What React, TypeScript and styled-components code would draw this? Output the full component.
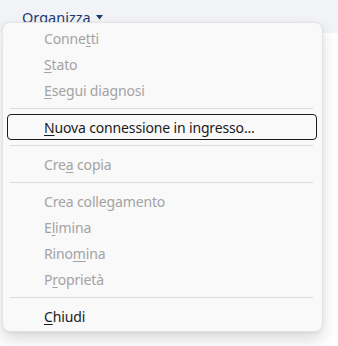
import React from "react";
import styled, { createGlobalStyle } from "styled-components";

const Global = createGlobalStyle`
  html, body { margin: 0; padding: 0; background: #ffffff; }
  body { font-family: "Noto Sans", "Open Sans", sans-serif; }
  #root { width: 338px; height: 346px; overflow: hidden; }
`;

const Page = styled.div`
  position: relative;
  width: 338px;
  height: 346px;
  background: #ffffff;
`;

const Toolbar = styled.div`
  height: 33px;
  background: #f1f3f6;
  display: flex;
  align-items: flex-start;
  padding-left: 22px;
  box-sizing: border-box;
`;

const ToolbarButton = styled.div`
  display: flex;
  align-items: center;
  gap: 5px;
  height: 20px;
  margin-top: 7px;
  font-family: "Noto Sans", sans-serif;
  font-size: 14.5px;
  color: #1b3a74;
`;

const Caret = styled.svg`
  width: 7px;
  height: 5px;
`;

const Menu = styled.div`
  position: absolute;
  left: 2px;
  top: 22px;
  width: 321px;
  box-sizing: border-box;
  background: #f9f9f9;
  border: 1px solid #e3e3e3;
  border-radius: 8px;
  box-shadow: 0 8px 16px rgba(0, 0, 0, 0.14), 0 1px 3px rgba(0, 0, 0, 0.06);
  padding: 2px 0 2px;
  display: flex;
  flex-direction: column;
`;

const Item = styled.div<{ $disabled?: boolean; $focused?: boolean }>`
  height: 26px;
  box-sizing: border-box;
  margin: 0 5px 0 4px;
  padding-left: 36px;
  display: flex;
  align-items: center;
  border: 1px solid ${(p) => (p.$focused ? "#1b1b1b" : "transparent")};
  border-radius: 4px;
  font-family: "Noto Sans", sans-serif;
  font-size: 14px;
  letter-spacing: -0.15px;
  color: ${(p) => (p.$disabled ? "#a3a3a3" : "#1a1a1a")};
  white-space: pre;
`;

const Label = styled.span`
  white-space: pre;
`;

const Key = styled.span`
  text-decoration: underline;
  text-underline-offset: 2px;
  text-decoration-thickness: 1px;
`;

const Separator = styled.div`
  height: 1px;
  background: #dcdcdc;
  margin: 5px 9px 5px 7px;
`;

type Entry =
  | { sep: true }
  | { sep?: false; pre: string; key: string; post: string; disabled?: boolean; focused?: boolean };

const entries: Entry[] = [
  { pre: "Conne", key: "t", post: "ti", disabled: true },
  { pre: "", key: "S", post: "tato", disabled: true },
  { pre: "", key: "E", post: "segui diagnosi", disabled: true },
  { sep: true },
  { pre: "", key: "N", post: "uova connessione in ingresso...", focused: true },
  { sep: true },
  { pre: "Cre", key: "a", post: " copia", disabled: true },
  { sep: true },
  { pre: "Crea colle", key: "g", post: "amento", disabled: true },
  { pre: "E", key: "l", post: "imina", disabled: true },
  { pre: "Rino", key: "m", post: "ina", disabled: true },
  { pre: "P", key: "r", post: "oprietà", disabled: true },
  { sep: true },
  { pre: "", key: "C", post: "hiudi" },
];

export default function App() {
  return (
    <Page>
      <Global />
      <Toolbar>
        <ToolbarButton>
          Organizza
          <Caret viewBox="0 0 7 5">
            <path d="M0 0 L7 0 L3.5 4.5 Z" fill="#1b3a74" />
          </Caret>
        </ToolbarButton>
      </Toolbar>
      <Menu>
        {entries.map((e, i) =>
          e.sep ? (
            <Separator key={i} />
          ) : (
            <Item key={i} $disabled={e.disabled} $focused={e.focused}>
              <Label>
                {e.pre}
                <Key>{e.key}</Key>
                {e.post}
              </Label>
            </Item>
          )
        )}
      </Menu>
    </Page>
  );
}
